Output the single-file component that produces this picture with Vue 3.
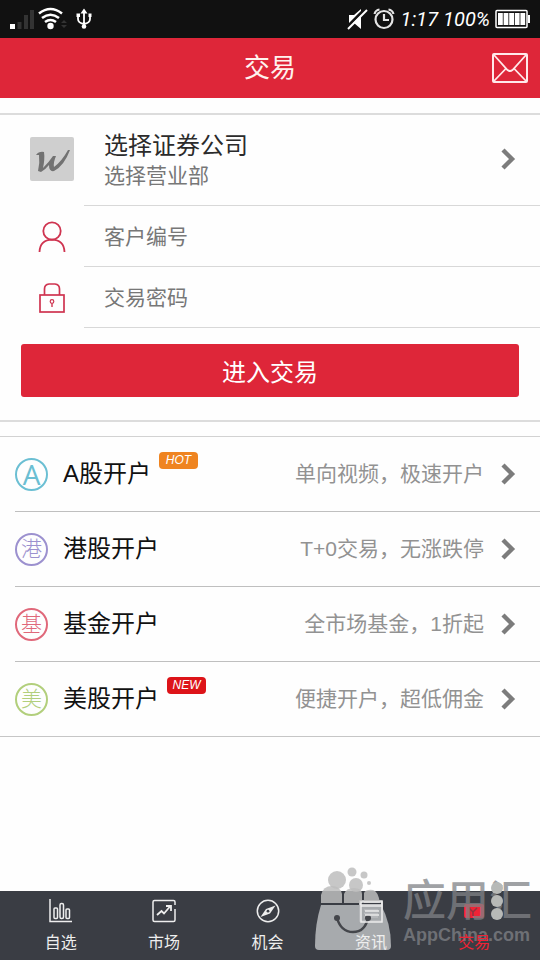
<script setup>
import { ref } from 'vue'

const account = ref('')
const password = ref('')

const products = [
  { mark: 'A', tone: 'cyan', name: 'A股开户', badge: 'HOT', note: '单向视频，极速开户' },
  { mark: '港', tone: 'violet', name: '港股开户', note: 'T+0交易，无涨跌停' },
  { mark: '基', tone: 'rose', name: '基金开户', note: '全市场基金，1折起' },
  { mark: '美', tone: 'lime', name: '美股开户', badge: 'NEW', note: '便捷开户，超低佣金' },
]

const tabs = [
  { id: 'watch', label: '自选' },
  { id: 'market', label: '市场' },
  { id: 'chance', label: '机会' },
  { id: 'news', label: '资讯' },
  { id: 'trade', label: '交易' },
]
</script>

<template>
  <div class="screen">
    <div class="status">
      <svg class="status-left" width="100" height="38" viewBox="0 0 100 38">
        <rect x="10" y="24" width="5" height="5" fill="#fff" />
        <path d="M17.500 29v-7h4v7zM24 29V15h4v14zM30 29V10h4v19z" fill="#333" />
        <g fill="none" stroke="#fff" stroke-width="2.600">
          <path d="M39 13.500Q50.500 4.500 62 13.500" />
          <path d="M42 18Q50.500 11.500 59 18" />
          <path d="M45 22Q50.500 18 56 22" />
        </g>
        <circle cx="50.500" cy="26" r="3.200" fill="#fff" />
        <path d="M61 23l3-3 3 3zM61 25l3 3 3-3z" fill="#333" />
        <g fill="none" stroke="#fff" stroke-width="1.800">
          <path d="M84 12v14M78 16v3q0 4 6 5q6-1 6-5v-3" />
        </g>
        <path d="M84 8.500l3.500 5h-7zM76.500 13.500h3.500v3.500h-3.500zM88.500 13.500h3v3.500h-3z" fill="#fff" />
        <circle cx="84" cy="26.500" r="2.300" fill="#fff" />
      </svg>
      <div class="status-right">
        <svg width="50" height="26" viewBox="0 0 50 26">
          <path d="M3 9h5l7-6v20l-7-6H3z" fill="#fff" />
          <path d="M1 21L19 3" stroke="#111" stroke-width="3" />
          <path d="M2 23L21 4" stroke="#fff" stroke-width="2" />
          <g fill="none" stroke="#e4e4e4" stroke-width="2.200">
            <circle cx="38" cy="13.500" r="8.500" />
            <path d="M38 8v6h5M28.500 8q1-4 5-4.500M47.500 8q-1-4-5-4.500" />
          </g>
        </svg>
        <span class="clock">1:17</span>
        <span class="charge">100%</span>
        <svg width="36" height="20" viewBox="0 0 36 20">
          <rect x="1" y="1.500" width="31" height="17" rx="1" fill="none" stroke="#fff" stroke-width="1.500" />
          <path d="M33 6h2v8h-2z" fill="#fff" />
          <path d="M3 4h4.800v12H3zM8.600 4h4.800v12H8.600zM14.200 4h4.800v12h-4.800zM19.800 4h4.800v12h-4.800zM25.400 4h4.800v12h-4.800z" fill="#fff" />
        </svg>
      </div>
    </div>

    <header class="bar">
      <h1>交易</h1>
      <button class="mail" type="button" aria-label="消息">
        <svg width="38" height="32" viewBox="0 0 38 32" fill="none" stroke="#ffe9ea">
          <rect x="2" y="2" width="34" height="28" rx="1" stroke-width="2" />
          <path d="M3 3l13.500 15q2.500 2 5 0L35 3M3 29l12-12.500M35 29L23 16.500" stroke-width="1.800" />
        </svg>
      </button>
    </header>

    <main>
      <form class="login" @submit.prevent>
        <button class="broker" type="button">
          <span class="side">
            <svg width="44" height="44" viewBox="0 0 44 44">
              <rect width="44" height="44" rx="2" fill="#cfcfcf" />
              <path d="M6 18Q9 14 14 15Q15 22 13 31Q19 25 23 19L26 19Q23 26 24 30Q32 24 38 13L40 13Q34 29 24 34Q19 35 19 28Q15 33 11 35L8 34Q10 26 9 18z" fill="#727272" />
            </svg>
          </span>
          <span class="broker-text">
            <span class="broker-name">选择证券公司</span>
            <span class="broker-branch">选择营业部</span>
          </span>
          <svg class="chevron" width="16" height="22" viewBox="0 0 16 22">
            <path d="M3 2l9 9-9 9" fill="none" stroke="#7c7c7c" stroke-width="4.400" />
          </svg>
        </button>
        <label class="field">
          <span class="side">
            <svg width="28" height="32" viewBox="0 0 28 32" fill="none" stroke="#cf3450" stroke-width="1.800">
              <circle cx="14" cy="10" r="8.700" />
              <path d="M1.500 31Q2 19 14 18.700Q26 19 26.500 31" />
            </svg>
          </span>
          <input v-model="account" type="text" placeholder="客户编号" aria-label="客户编号" />
        </label>
        <label class="field">
          <span class="side">
            <svg width="28" height="32" viewBox="0 0 28 32" fill="none" stroke="#cf3450" stroke-width="1.700">
              <rect x="2" y="13" width="24" height="17" />
              <path d="M6.500 13V7q0-4.500 4.500-5h6q4.500.500 4.500 5v6" />
              <circle cx="14" cy="19.500" r="1.800" stroke-width="1.200" />
              <path d="M14 21.500v3.500" stroke-width="1.400" />
            </svg>
          </span>
          <input v-model="password" type="password" placeholder="交易密码" aria-label="交易密码" />
        </label>
        <div class="action">
          <button class="submit" type="submit">进入交易</button>
        </div>
      </form>

      <ul class="products">
        <li v-for="item in products" :key="item.name">
          <a href="#" class="product">
            <span class="mark" :class="item.tone">{{ item.mark }}</span>
            <span class="name">{{ item.name }}</span>
            <span v-if="item.badge" class="badge" :class="item.badge.toLowerCase()">{{ item.badge }}</span>
            <span class="note">{{ item.note }}</span>
            <svg class="chevron" width="16" height="22" viewBox="0 0 16 22">
              <path d="M3 2l9 9-9 9" fill="none" stroke="#7c7c7c" stroke-width="4.400" />
            </svg>
          </a>
        </li>
      </ul>
    </main>

    <nav class="tabs">
      <a v-for="tab in tabs" :key="tab.id" href="#" class="tab" :class="{ active: tab.id === 'trade' }">
        <svg width="24" height="24" viewBox="0 0 24 24" fill="none" stroke="currentColor" stroke-width="1.500">
          <template v-if="tab.id === 'watch'">
            <path d="M1 0v22.500h22" />
            <rect x="5" y="9" width="3.500" height="10.500" rx="1" />
            <rect x="11" y="4.500" width="3.500" height="15" rx="1.500" />
            <rect x="17" y="10" width="3.500" height="9.500" rx="1" />
          </template>
          <template v-else-if="tab.id === 'market'">
            <path d="M23 10v11q0 1.500-1.500 1.500h-19Q1 22.500 1 21V3q0-1.500 1.500-1.500h19Q23 1.500 23 3v3" />
            <path d="M5 16l4.500-4 2.500 2.500 6-7M14 7h5v5" stroke-width="1.800" />
          </template>
          <template v-else-if="tab.id === 'chance'">
            <circle cx="12" cy="12" r="10.700" />
            <path d="M19.500 6.500l-5.500 8-9.500 3.500 5.500-8z" fill="currentColor" stroke="none" />
            <circle cx="12" cy="12.200" r="1.400" fill="#3a3d44" stroke="none" />
          </template>
          <template v-else-if="tab.id === 'news'">
            <rect x="1" y="2" width="22" height="20" />
            <path d="M1 6h22M5 11h14M5 14.500h14M5 18h14" />
          </template>
          <template v-else>
            <rect x="2" y="5" width="20" height="14" rx="2" fill="currentColor" stroke="none" />
            <path d="M7 9l4 4 4-4M11 13v4" stroke="#8d3440" />
          </template>
        </svg>
        <span>{{ tab.label }}</span>
      </a>
    </nav>

    <div class="watermark">
      <svg width="78" height="86" viewBox="0 0 78 86">
        <g fill="#bdbdbd" fill-opacity=".85">
          <circle cx="22" cy="14" r="9" />
          <circle cx="37" cy="6" r="4.500" />
          <circle cx="49" cy="9" r="3.500" />
          <circle cx="41" cy="19" r="7" />
          <circle cx="54" cy="17" r="2" />
          <path d="M6 37V29q2-9 11-9 8 0 10 8v9z" />
          <path d="M29 37V28q2-6 10-6t8 6v9z" />
          <path d="M49 37V27q2-4 9-3 5 1 7 13z" />
        </g>
        <path d="M6 39h60q10 18 10 41 0 4-4 4H4q-4 0-4-4Q0 58 6 39z" fill="#b4b6b9" fill-opacity=".9" />
        <path d="M22 52q4 14 16 14t15-14" fill="none" stroke="#44464b" stroke-width="2.500" />
        <circle cx="22" cy="52" r="3" fill="#44464b" />
        <circle cx="53" cy="52" r="3" fill="#44464b" />
        <path d="M46 36h21v20H46zM46 40h21M50 45h14M50 49h14" fill="none" stroke="#ececec" stroke-width="1.500" />
      </svg>
      <div class="brand">
        <span class="brand-name">应用汇</span>
        <span class="brand-url">AppChina.com</span>
        <svg class="dots" width="14" height="40" viewBox="0 0 14 40" fill="#b7b9b7">
          <circle cx="7" cy="7" r="6" />
          <circle cx="7" cy="20" r="6" />
          <circle cx="7" cy="33" r="6" />
        </svg>
      </div>
    </div>
  </div>
</template>

<style>
body {
  margin: 0;
  background: #fefefe;
}
</style>

<style scoped>
.screen {
  position: relative;
  display: flex;
  flex-direction: column;
  min-height: 100vh;
  overflow: hidden;
  font-family: "Liberation Sans", "Noto Sans CJK SC", sans-serif;
  color: #111;
}
.screen * {
  box-sizing: border-box;
}
button,
input {
  border: 0;
  padding: 0;
  background: none;
  font-family: inherit;
  color: inherit;
}
a {
  color: inherit;
  text-decoration: none;
}
svg {
  display: block;
  flex: none;
}

.status {
  display: flex;
  justify-content: space-between;
  align-items: center;
  height: 38px;
  padding-right: 9px;
  background: #111;
  color: #fff;
}
.status-right {
  display: flex;
  align-items: center;
  gap: 5px;
  font: italic 20px/38px Roboto, sans-serif;
}

.bar {
  display: grid;
  grid-template-columns: 1fr auto 1fr;
  align-items: center;
  height: 60px;
  padding: 0 11px;
  background: #de2639;
  color: #fff3ee;
}
.bar h1 {
  grid-column: 2;
  margin: 0;
  font-size: 26px;
  line-height: 60px;
  font-weight: 400;
}
.mail {
  justify-self: end;
}

main {
  flex: 1;
  padding: 15px 0 24px;
}
.login {
  border-top: 2px solid #dcdcdc;
  border-bottom: 2px solid #dcdcdc;
}
.side {
  display: flex;
  flex: none;
  justify-content: center;
  width: 104px;
}
.broker,
.field {
  display: flex;
  align-items: center;
  width: 100%;
  background: linear-gradient(#d8d8d8, #d8d8d8) 84px 100% / 100% 1px no-repeat;
}
.broker {
  height: 91px;
  padding: 0 24px 3px 0;
  text-align: left;
}
.broker-text {
  flex: 1;
  display: flex;
  flex-direction: column;
  padding-top: 2px;
}
.broker-name {
  font-size: 24px;
  line-height: 32px;
  color: #2b2b2b;
}
.broker-branch {
  font-size: 21px;
  line-height: 28px;
  color: #777;
}
.field {
  height: 61px;
}
.field input {
  flex: 1;
  min-width: 0;
  height: 60px;
  font-size: 21px;
  outline: 0;
}
.field input::placeholder {
  color: #777;
  opacity: 1;
}
.action {
  padding: 16px 21px 23px;
}
.submit {
  display: block;
  width: 100%;
  height: 53px;
  border-radius: 3px;
  background: #de2639;
  color: #fff;
  font-size: 24px;
}

.products {
  margin: 14px 0 0;
  padding: 0;
  list-style: none;
  border-top: 1px solid #d2d2d2;
  border-bottom: 1px solid #c6c6c6;
}
.products li {
  padding-left: 15px;
}
.product {
  display: flex;
  align-items: center;
  height: 75px;
  padding-right: 24px;
  border-bottom: 1px solid #bfbfbf;
}
.products li:last-child .product {
  height: 74px;
  border-bottom: 0;
}
.mark {
  display: flex;
  flex: none;
  align-items: center;
  justify-content: center;
  width: 33px;
  height: 33px;
  border: 2px solid currentColor;
  border-radius: 50%;
  font-size: 21px;
  line-height: 28px;
  font-weight: 300;
}
.cyan {
  color: #6bbfd3;
  font-family: "Open Sans", sans-serif;
  font-size: 28px;
  font-weight: 400;
}
.violet {
  color: #9c91cf;
}
.rose {
  color: #e0687a;
}
.lime {
  color: #b2cf7c;
}
.name {
  margin-left: 15px;
  font-size: 24px;
  line-height: 32px;
  color: #111;
}
.badge {
  align-self: flex-start;
  margin: 15px 0 0 8px;
  width: 39px;
  border-radius: 4px;
  color: #fff;
  font-size: 12px;
  line-height: 17px;
  font-style: italic;
  text-align: center;
}
.hot {
  background: #ef8420;
}
.new {
  background: #dd1419;
}
.note {
  flex: 1;
  text-align: right;
  font-size: 21px;
  line-height: 28px;
  color: #929292;
}
.product .chevron {
  margin-left: 16px;
}

.tabs {
  display: flex;
  height: 69px;
  padding: 8px 14px 0 9px;
  background: #3a3d44;
  color: #eee;
}
.tab {
  flex: 1;
  display: flex;
  flex-direction: column;
  align-items: center;
  gap: 8px;
  font-size: 16px;
  line-height: 24px;
}
.tab span {
  position: relative;
  z-index: 2;
}
.active {
  color: #ef2335;
}

.watermark {
  position: absolute;
  z-index: 1;
  right: 8px;
  bottom: 8px;
  display: flex;
  align-items: flex-start;
  gap: 10px;
  pointer-events: none;
}
.brand {
  position: relative;
  display: flex;
  flex-direction: column;
  padding-top: 11px;
  color: rgba(128, 130, 134, 0.75);
}
.brand-name {
  font-size: 43px;
  line-height: 48px;
  font-weight: 500;
}
.brand-url {
  font-size: 18px;
  line-height: 20px;
  font-weight: 700;
}
.dots {
  position: absolute;
  left: 87px;
  top: 15px;
}
</style>
